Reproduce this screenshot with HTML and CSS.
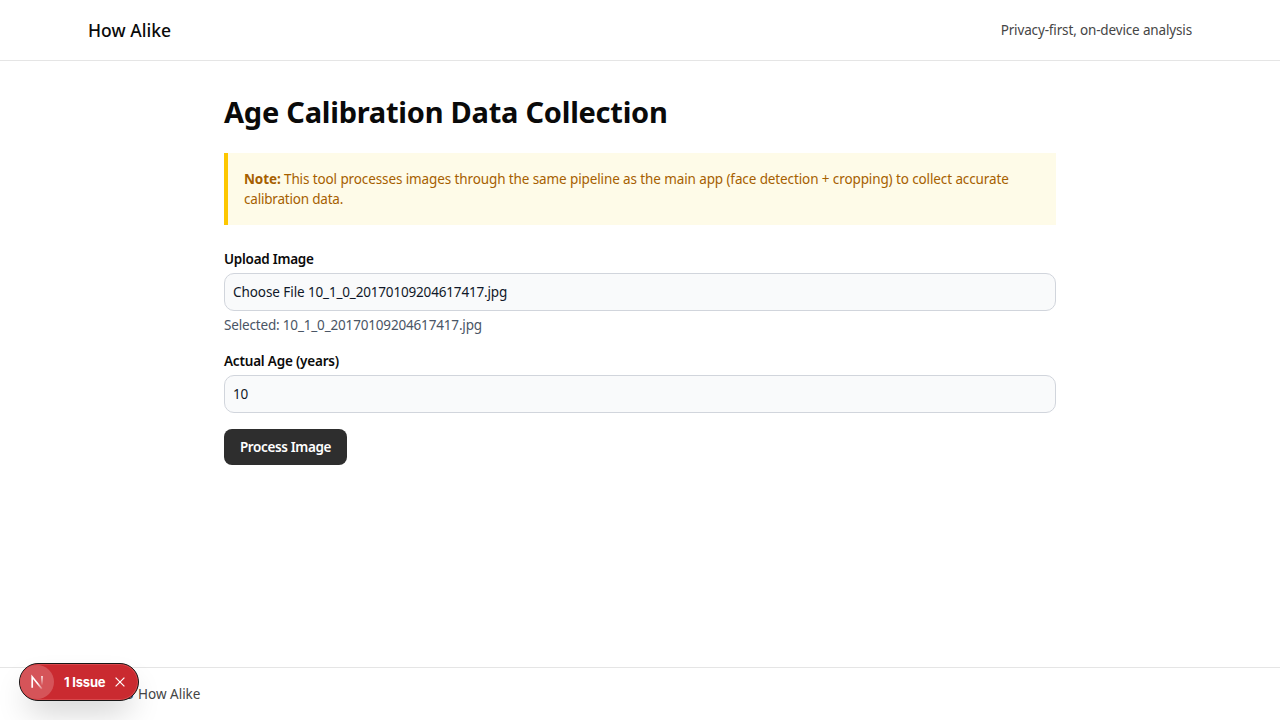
FILE: index.html
```html
<!DOCTYPE html>
<html lang="en">
<head>
<meta charset="utf-8">
<title>How Alike</title>
<link rel="stylesheet" href="styles.css">
</head>
<body>
<div class="page">
  <header class="header">
    <div class="bar">
      <span class="brand">How Alike</span>
      <span class="tagline">Privacy-first, on-device analysis</span>
    </div>
  </header>
  <main class="main">
    <h1 class="title">Age Calibration Data Collection</h1>
    <div class="note"><strong>Note:</strong> <span class="note-text">This tool processes images through the same pipeline as the main app (face detection + cropping) to collect accurate<br><span class="note-end">calibration data.</span></span></div>
    <form class="form">
      <div class="field">
        <div class="label upload-label">Upload Image</div>
        <div class="control file"><span class="choose">Choose File</span> <span>10_1_0_20170109204617417.jpg</span></div>
        <p class="hint">Selected: 10_1_0_20170109204617417.jpg</p>
      </div>
      <div class="field">
        <label class="label age-label" for="age">Actual Age (years)</label>
        <input class="control" id="age" type="text" value="10">
      </div>
      <button class="submit" type="button">Process Image</button>
    </form>
  </main>
  <footer class="footer">
    <div class="copyright"><span class="year">© 2025</span><span>How Alike</span></div>
  </footer>
</div>
<div class="issue-badge">
  <div class="issue-logo">
    <svg width="34" height="34" viewBox="0 0 34 34" fill="none">
      <defs>
        <linearGradient id="diag" x1="18" y1="18" x2="23" y2="24" gradientUnits="userSpaceOnUse"><stop stop-color="#fff"/><stop offset="1" stop-color="#fff" stop-opacity=".1"/></linearGradient>
        <linearGradient id="stem" x1="0" y1="11" x2="0" y2="20" gradientUnits="userSpaceOnUse"><stop stop-color="#fff"/><stop offset="1" stop-color="#fff" stop-opacity=".05"/></linearGradient>
      </defs>
      <path d="M12.2 22.8V11.8L21.8 23.8" stroke="url(#diag)" stroke-width="1.7"/>
      <path d="M22 11v9" stroke="url(#stem)" stroke-width="1.5"/>
    </svg>
  </div>
  <span class="issue-text">1 Issue</span>
  <svg class="issue-close" width="10" height="10" viewBox="0 0 10 10"><path d="M.6.6l8.8 8.8M9.4.6L.6 9.4" stroke="#fff" stroke-width="1.2"/></svg>
</div>
</body>
</html>
```
FILE: styles.css
```css
* { box-sizing: border-box; margin: 0; }
body {
  background: #fff;
  color: #0a0a0a;
  font: 13.5px/20px "Noto Sans", "Open Sans", sans-serif;
  letter-spacing: -0.15px;
}
.page { height: 720px; display: flex; flex-direction: column; overflow: hidden; }
.header { height: 61px; border-bottom: 1px solid #e5e5e5; }
.bar { height: 60px; padding: 0 88px; display: flex; align-items: center; justify-content: space-between; }
.brand { font-size: 17.5px; line-height: 28px; font-weight: 500; letter-spacing: 0.03px; }
.tagline { color: #454545; }
.main { flex: 1; width: 832px; margin: 0 auto; padding-top: 33px; }
.title { font-size: 29px; line-height: 36px; font-weight: 700; margin-bottom: 23px; white-space: nowrap; letter-spacing: -0.24px; }
.note { height: 72px; padding: 16px; border-left: 4px solid #fdc700; background: #fefbe8; color: #a65f00; margin-bottom: 24px; white-space: nowrap; letter-spacing: -0.11px; }
.note-end { letter-spacing: -0.2px; }
.form { display: flex; flex-direction: column; gap: 16px; align-items: flex-start; }
.field { width: 100%; }
.label { display: block; font-weight: 600; margin-bottom: 4px; }
.upload-label { letter-spacing: -0.26px; }
.age-label { letter-spacing: -0.2px; }
.control { display: block; width: 100%; height: 38px; padding: 8px; border: 1px solid #d1d5dc; border-radius: 10px; background: #f9fafb; color: #101828; font: inherit; letter-spacing: -0.17px; }
.choose { letter-spacing: -0.07px; }
.hint { margin-top: 4px; color: #4a5565; letter-spacing: -0.17px; }
.submit { height: 36px; width: 123px; padding: 0; border: 0; border-radius: 8px; background: #2e2e2e; color: #fff; font: inherit; font-weight: 600; letter-spacing: -0.36px; white-space: nowrap; }
.footer { height: 53px; border-top: 1px solid #e5e5e5; padding: 16px 88px; color: #454545; }
.copyright { display: flex; letter-spacing: 0; }
.year { width: 50px; }
.issue-badge {
  position: absolute; left: 19px; top: 663px; width: 120px; height: 38px;
  display: flex; align-items: center;
  border: 1px solid #171717; border-radius: 19px;
  background: #ca2a30;
  box-shadow: inset 0 0 0 1px #d9474b, 0 16px 32px -8px rgba(0,0,0,.24);
  color: #fff;
}
.issue-logo { width: 34px; height: 34px; border-radius: 50%; background: #d55459; flex: none; display: flex; }
.issue-text { width: 42px; margin-left: 10px; font: 700 13px/20px Inter, sans-serif; letter-spacing: -0.2px; white-space: nowrap; }
.issue-close { margin-left: 9px; }
```
